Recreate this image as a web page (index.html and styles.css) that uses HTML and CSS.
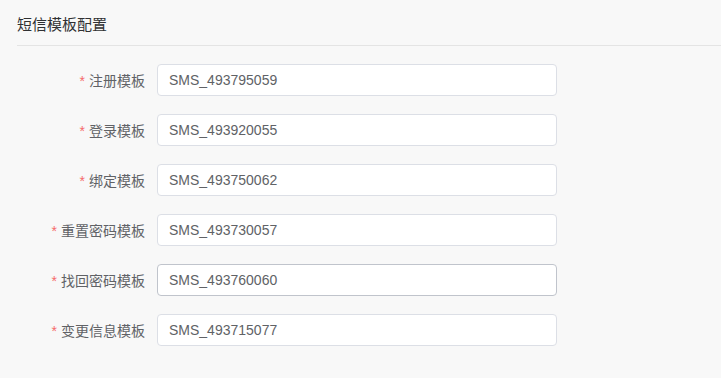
FILE: index.html
```html
<!DOCTYPE html>
<html lang="zh">
  <head>
    <meta charset="UTF-8" />
    <title>短信模板配置</title>
    <link rel="stylesheet" href="styles.css">
  </head>
  <body>
    <div class="panel">
      <div class="panel-header">短信模板配置</div>
      <form class="sms-form">
        <div class="form-item">
          <label class="form-label"><span class="star">*</span>注册模板</label>
          <input class="form-input" type="text" value="SMS_493795059" />
        </div>
        <div class="form-item">
          <label class="form-label"><span class="star">*</span>登录模板</label>
          <input class="form-input" type="text" value="SMS_493920055" />
        </div>
        <div class="form-item">
          <label class="form-label"><span class="star">*</span>绑定模板</label>
          <input class="form-input" type="text" value="SMS_493750062" />
        </div>
        <div class="form-item">
          <label class="form-label"><span class="star">*</span>重置密码模板</label>
          <input class="form-input" type="text" value="SMS_493730057" />
        </div>
        <div class="form-item">
          <label class="form-label"><span class="star">*</span>找回密码模板</label>
          <input class="form-input hover" type="text" value="SMS_493760060" />
        </div>
        <div class="form-item">
          <label class="form-label"><span class="star">*</span>变更信息模板</label>
          <input class="form-input" type="text" value="SMS_493715077" />
        </div>
      </form>
    </div>
  </body>
</html>
```

FILE: styles.css
```css
body {
  margin: 0;
  padding: 0;
  background: #f8f8f8;
  font-family: "Liberation Sans", "Noto Sans CJK SC", sans-serif;
}
.panel {
  padding-left: 17px;
}
.panel-header {
  height: 45px;
  line-height: 50px;
  font-size: 15px;
  color: #303133;
  border-bottom: 1px solid #e4e4e4;
  box-sizing: border-box;
  height: 46px;
}
.sms-form {
  padding-top: 18px;
}
.form-item {
  display: flex;
  align-items: center;
  margin-bottom: 18px;
}
.form-label {
  width: 140px;
  padding-right: 12px;
  box-sizing: border-box;
  text-align: right;
  font-size: 14px;
  color: #606266;
}
.star {
  color: #f56c6c;
  margin-right: 4px;
}
.form-input {
  width: 400px;
  height: 32px;
  box-sizing: border-box;
  border: 1px solid #dcdfe6;
  border-radius: 4px;
  background: #fff;
  padding: 0 11px;
  font-family: "Liberation Sans", "Noto Sans CJK SC", sans-serif;
  font-size: 14px;
  color: #606266;
  outline: none;
}
.form-input.hover {
  border-color: #c0c4cc;
}
```
